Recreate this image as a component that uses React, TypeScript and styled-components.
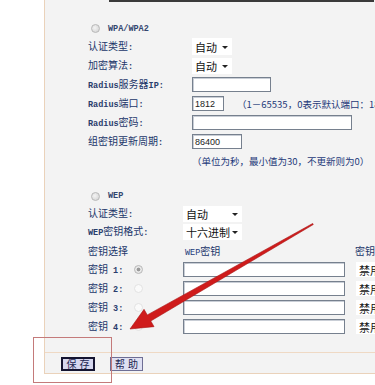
import React from 'react';
import styled, { createGlobalStyle } from 'styled-components';

const Global = createGlobalStyle`
  html, body { margin: 0; padding: 0; background: #ffffff; }
  body { width: 375px; height: 385px; overflow: hidden; font-family: "Noto Sans CJK SC", sans-serif; }
`;

const Page = styled.div`
  position: relative;
  width: 375px;
  height: 385px;
  background: #ffffff;
  overflow: hidden;
`;

const Panel = styled.div`
  margin-left: 44px;
  width: 331px;
  height: 374px;
  box-sizing: border-box;
  background: #f3f3f3;
  border-left: 1px solid #ead2ba;
  border-bottom: 1px solid #ead2ba;
  display: flex;
  flex-direction: column;
`;

const TopBar = styled.div`
  margin-left: 64px;
  width: 265px;
  height: 2px;
  background: #3a3a3a;
  flex: none;
`;

const Section = styled.div<{ $top: number }>`
  margin-top: ${p => p.$top}px;
  padding-left: 43px;
  display: flex;
  flex-direction: column;
`;

const Row = styled.div<{ $h: number }>`
  height: ${p => p.$h}px;
  display: flex;
  align-items: center;
  flex: none;
`;

const Label = styled.div<{ $w: number }>`
  width: ${p => p.$w}px;
  flex: none;
  font-family: "Noto Sans CJK SC", sans-serif;
  font-size: 10px;
  color: #22366a;
  white-space: nowrap;
  line-height: 1;
`;

const Lat = styled.span`
  font-family: "Liberation Mono", monospace;
  font-size: 8.5px;
  font-weight: bold;
  color: #2a3d6c;
`;

const RadioLabel = styled.span`
  font-family: "Liberation Mono", monospace;
  font-size: 8.5px;
  font-weight: bold;
  color: #33466f;
  margin-left: 8px;
`;

const Radio = styled.span<{ $checked?: boolean; $faint?: boolean }>`
  display: inline-block;
  box-sizing: border-box;
  width: 9px;
  height: 9px;
  border-radius: 50%;
  border: 1px solid ${p => (p.$faint ? '#e2e2e2' : '#b8b8b8')};
  background: ${p =>
    p.$faint
      ? '#fafafa'
      : p.$checked
      ? 'radial-gradient(circle, #9a9a9a 0 1.6px, #e8e8e8 2.2px)'
      : 'radial-gradient(circle at 40% 40%, #f4f4f4, #cfcfcf)'};
  flex: none;
`;

const RadioSlot = styled.div`
  width: 49px;
  flex: none;
  display: flex;
  align-items: center;
`;

const Select = styled.div<{ $w: number; $h: number }>`
  width: ${p => p.$w}px;
  height: ${p => p.$h}px;
  box-sizing: border-box;
  background: #ffffff;
  display: flex;
  align-items: center;
  justify-content: space-between;
  padding: 0 4px 0 3px;
  font-family: "Noto Sans CJK SC", sans-serif;
  font-size: 11px;
  color: #111;
  flex: none;
  white-space: nowrap;
  overflow: hidden;
`;

const Caret = styled.span`
  width: 0;
  height: 0;
  border-left: 3px solid transparent;
  border-right: 3px solid transparent;
  border-top: 3px solid #222;
  margin-top: 1px;
`;

const Input = styled.div<{ $w: number }>`
  width: ${p => p.$w}px;
  height: 15px;
  box-sizing: border-box;
  background: #ffffff;
  border: 1px solid #76808e;
  box-shadow: inset 1px 1px 0 #c9ced6;
  font-family: "Liberation Sans", sans-serif;
  font-size: 9px;
  color: #222;
  display: flex;
  align-items: center;
  padding-left: 2px;
  flex: none;
`;

const Hint = styled.span<{ $ml?: number }>`
  margin-left: ${p => p.$ml ?? 0}px;
  font-family: "Noto Sans CJK SC", sans-serif;
  font-size: 9.5px;
  color: #1f3a7a;
  white-space: nowrap;
`;

const Header = styled.span<{ $w?: number }>`
  ${p => (p.$w ? `width: ${p.$w}px; flex: none;` : '')}
  font-family: "Noto Sans CJK SC", sans-serif;
  font-size: 10px;
  color: #22366a;
  white-space: nowrap;
`;

const HeaderLat = styled.span`
  font-family: "Liberation Mono", monospace;
  font-size: 8.5px;
  color: #1f3a7a;
`;

const Spacer = styled.div<{ $h: number }>`
  height: ${p => p.$h}px;
  flex: none;
`;

const Separator = styled.div`
  height: 1px;
  background: #efd9c4;
  flex: none;
`;

const ButtonBar = styled.div`
  display: flex;
  align-items: center;
  gap: 15px;
  padding: 2px 0 0 16px;
  height: 19px;
  box-sizing: border-box;
`;

const Button = styled.div<{ $focus?: boolean }>`
  width: ${p => (p.$focus ? 34 : 33)}px;
  height: 14px;
  box-sizing: border-box;
  border: ${p => (p.$focus ? '2px solid #141430' : '1px solid #6e6e94')};
  background: ${p => (p.$focus ? '#d6d7ee' : '#dfe0f2')};
  display: flex;
  align-items: center;
  justify-content: center;
  font-family: "Noto Sans CJK SC", sans-serif;
  font-size: 10px;
  letter-spacing: 3px;
  text-indent: 3px;
  color: #1c2450;
  line-height: 1;
`;

const Annotation = styled.div`
  position: absolute;
  left: 33px;
  top: 337px;
  width: 79px;
  height: 46px;
  box-sizing: border-box;
  border: 1px solid #c47a7a;
  pointer-events: none;
`;

const ArrowLayer = styled.svg`
  position: absolute;
  left: 0;
  top: 0;
  width: 375px;
  height: 385px;
  pointer-events: none;
`;

const keyRows = [1, 2, 3, 4];

export default function App() {
  return (
    <Page>
      <Global />
      <Panel>
        <TopBar />
        <Section $top={18}>
          <Row $h={17} style={{ paddingLeft: 3 }}>
            <Radio />
            <RadioLabel>WPA/WPA2</RadioLabel>
          </Row>
          <Row $h={19}>
            <Label $w={104}>认证类型<Lat>:</Lat></Label>
            <Select $w={40} $h={17}>自动<Caret /></Select>
          </Row>
          <Row $h={19}>
            <Label $w={104}>加密算法<Lat>:</Lat></Label>
            <Select $w={40} $h={16}>自动<Caret /></Select>
          </Row>
          <Row $h={19}>
            <Label $w={104}><Lat>Radius</Lat>服务器<Lat>IP:</Lat></Label>
            <Input $w={79} />
          </Row>
          <Row $h={19}>
            <Label $w={104}><Lat>Radius</Lat>端口<Lat>:</Lat></Label>
            <Input $w={32}>1812</Input>
            <Hint $ml={13}>（1－65535，0表示默认端口：1812）</Hint>
          </Row>
          <Row $h={19}>
            <Label $w={104}><Lat>Radius</Lat>密码<Lat>:</Lat></Label>
            <Input $w={160} />
          </Row>
          <Row $h={19}>
            <Label $w={104}>组密钥更新周期<Lat>:</Lat></Label>
            <Input $w={50}>86400</Input>
          </Row>
          <Row $h={19}>
            <Label $w={104} />
            <Hint>（单位为秒，最小值为30，不更新则为0）</Hint>
          </Row>
        </Section>
        <Section $top={17}>
          <Row $h={18} style={{ paddingLeft: 3 }}>
            <Radio />
            <RadioLabel>WEP</RadioLabel>
          </Row>
          <Row $h={18}>
            <Label $w={95}>认证类型<Lat>:</Lat></Label>
            <Select $w={59} $h={16}>自动<Caret /></Select>
          </Row>
          <Row $h={18}>
            <Label $w={95}><Lat>WEP</Lat>密钥格式<Lat>:</Lat></Label>
            <Select $w={59} $h={16}>十六进制<Caret /></Select>
          </Row>
          <Row $h={19}>
            <Header $w={97}>密钥选择</Header>
            <Header $w={170}><HeaderLat>WEP</HeaderLat>密钥</Header>
            <Header>密钥类型</Header>
          </Row>
          {keyRows.map(n => (
            <Row $h={19} key={n}>
              <Label $w={46}>密钥<Lat> {n}:</Lat></Label>
              <RadioSlot>
                <Radio $checked={n === 1} $faint={n !== 1} />
              </RadioSlot>
              <Input $w={162} />
              <Select $w={40} $h={15} style={{ marginLeft: 11 }}>禁用</Select>
            </Row>
          ))}
        </Section>
        <Spacer $h={16} />
        <Separator />
        <ButtonBar>
          <Button $focus>保存</Button>
          <Button>帮助</Button>
        </ButtonBar>
      </Panel>
      <Annotation />
      <ArrowLayer viewBox="0 0 375 385">
        <polygon
          points="313.3,224.52 150.78,321 154.04,326.63 130,329 144.02,309.33 147.28,314.95 312.7,223.48"
          fill="#cf1b1b"
          stroke="#a81414"
          strokeWidth="0.6"
          strokeLinejoin="round"
        />
      </ArrowLayer>
    </Page>
  );
}
